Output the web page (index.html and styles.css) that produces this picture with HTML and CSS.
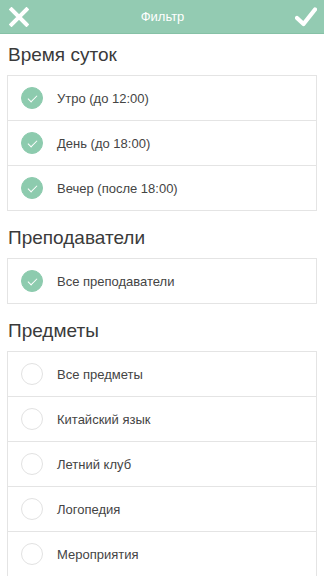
FILE: index.html
```html
<!DOCTYPE html>
<html lang="ru">
<head>
<meta charset="utf-8">
<title>Фильтр</title>
<link rel="stylesheet" href="styles.css">
</head>
<body>
<header class="topbar">
  <button class="icon-btn" aria-label="Закрыть">
    <svg width="20" height="20" viewBox="0 0 20 20"><path d="M2.5 2.5 L17.5 17.5 M17.5 2.5 L2.5 17.5" stroke="#fff" stroke-width="4" stroke-linecap="square" fill="none"/></svg>
  </button>
  <div class="topbar-title">Фильтр</div>
  <button class="icon-btn" aria-label="Применить">
    <svg width="22" height="20" viewBox="0 0 22 20"><path d="M2 11 L8.5 17 L20 2.5" stroke="#fff" stroke-width="4.2" stroke-linecap="round" stroke-linejoin="round" fill="none"/></svg>
  </button>
</header>

<main class="content">
  <h2 class="section-title first">Время суток</h2>
  <ul class="card">
    <li class="row"><span class="check on"></span><span class="label">Утро (до 12:00)</span></li>
    <li class="row"><span class="check on"></span><span class="label">День (до 18:00)</span></li>
    <li class="row"><span class="check on"></span><span class="label">Вечер (после 18:00)</span></li>
  </ul>

  <h2 class="section-title">Преподаватели</h2>
  <ul class="card">
    <li class="row"><span class="check on"></span><span class="label">Все преподаватели</span></li>
  </ul>

  <h2 class="section-title">Предметы</h2>
  <ul class="card">
    <li class="row"><span class="check"></span><span class="label">Все предметы</span></li>
    <li class="row"><span class="check"></span><span class="label">Китайский язык</span></li>
    <li class="row"><span class="check"></span><span class="label">Летний клуб</span></li>
    <li class="row"><span class="check"></span><span class="label">Логопедия</span></li>
    <li class="row"><span class="check"></span><span class="label">Мероприятия</span></li>
  </ul>
</main>
</body>
</html>
```

FILE: styles.css
```css
* { box-sizing: border-box; }
html, body {
  margin: 0;
  padding: 0;
  background: #fff;
  font-family: "Liberation Sans", Arial, sans-serif;
  overflow: hidden;
}
.topbar {
  height: 34px;
  background: #93cbb2;
  border-bottom: 1px solid #86c1a6;
  display: flex;
  align-items: center;
  justify-content: space-between;
  padding: 0 7px 0 8px;
}
.icon-btn {
  background: none;
  border: 0;
  padding: 0;
  width: 22px;
  height: 22px;
  display: flex;
  align-items: center;
  justify-content: center;
}
.topbar-title {
  color: #fff;
  font-size: 13px;
}
.content {
  padding: 0 7px;
}
.section-title {
  margin: 12px 0 0;
  padding: 0 0 0 1px;
  height: 35px;
  line-height: 30px;
  font-size: 19px;
  font-weight: 400;
  color: #3a3a3a;
}
.section-title.first {
  margin-top: 6px;
}
.card {
  list-style: none;
  margin: 0;
  padding: 0;
  border: 1px solid #e4e4e4;
}
.row {
  height: 45px;
  display: flex;
  align-items: center;
  padding-left: 13px;
  border-top: 1px solid #e4e4e4;
}
.row:first-child {
  border-top: 0;
  height: 44px;
}
.check {
  width: 22px;
  height: 22px;
  border-radius: 50%;
  border: 1px solid #e2e2e2;
  background: #fff;
  flex: none;
  position: relative;
}
.check.on {
  background: #8dcbae;
  border-color: #8dcbae;
}
.check.on::after {
  content: "";
  position: absolute;
  left: 6px;
  top: 4px;
  width: 8px;
  height: 4px;
  border-left: 1.3px solid #fff;
  border-bottom: 1.3px solid #fff;
  transform: translate(0, 3px) rotate(-45deg);
  transform-origin: center;
}
.label {
  margin-left: 14px;
  font-size: 13px;
  color: #444;
}
```
